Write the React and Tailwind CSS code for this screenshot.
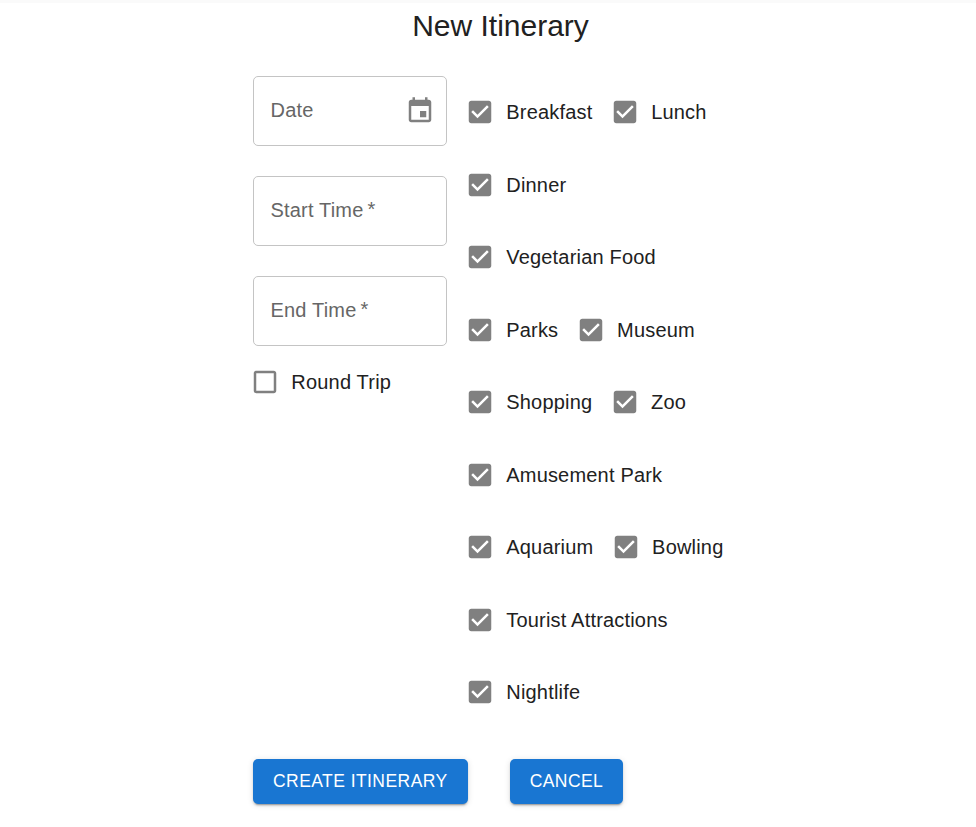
import React from "react";

const OPTION_ROWS = [
  ["Breakfast", "Lunch"],
  ["Dinner"],
  ["Vegetarian Food"],
  ["Parks", "Museum"],
  ["Shopping", "Zoo"],
  ["Amusement Park"],
  ["Aquarium", "Bowling"],
  ["Tourist Attractions"],
  ["Nightlife"],
];

const CHECKED =
  "M19 3H5c-1.11 0-2 .9-2 2v14c0 1.1.89 2 2 2h14c1.11 0 2-.9 2-2V5c0-1.1-.89-2-2-2zm-9 14l-5-5 1.41-1.41L10 14.17l7.59-7.59L19 8l-9 9z";
const UNCHECKED =
  "M19 5v14H5V5h14m0-2H5c-1.1 0-2 .9-2 2v14c0 1.1.9 2 2 2h14c1.1 0 2-.9 2-2V5c0-1.1-.9-2-2-2z";
const CALENDAR =
  "M17 12h-5v5h5v-5zM16 1v2H8V1H6v2H5c-1.11 0-1.99.9-1.99 2L3 19c0 1.1.89 2 2 2h14c1.1 0 2-.9 2-2V5c0-1.1-.9-2-2-2h-1V1h-2zm3 18H5V8h14v11z";

function Icon({ path }) {
  return (
    <svg viewBox="0 0 24 24" className="size-[30px] shrink-0 fill-[#808080]">
      <path d={path} />
    </svg>
  );
}

function Option({ label, checked }) {
  return (
    <label className="-ml-[13.75px] mr-5 flex items-center">
      <span className="p-[11.25px]">
        <Icon path={checked ? CHECKED : UNCHECKED} />
      </span>
      <span className="whitespace-nowrap leading-[30px]">{label}</span>
    </label>
  );
}

function Field({ label, required, children }) {
  return (
    <div className="flex h-[70px] w-[194px] items-center justify-between rounded-[5px] border border-[#c4c4c4] pl-[16.5px] pr-[11px] text-[#666666]">
      <span className="-mt-0.5 flex">
        {label}
        {required && <span className="-mt-px mb-px ml-1">*</span>}
      </span>
      {children}
    </div>
  );
}

function Button({ children }) {
  return (
    <button className="h-[45px] rounded-[5px] bg-[#1976d2] px-5 text-[17.5px] tracking-[0.44px] whitespace-nowrap text-white shadow-[0_3px_1px_-2px_rgba(0,0,0,0.2),0_2px_2px_0_rgba(0,0,0,0.14),0_1px_6px_0_rgba(0,0,0,0.12)]">
      {children}
    </button>
  );
}

export default function App() {
  return (
    <div className="h-[827px] overflow-hidden border-t-[3px] border-[#fafafa] bg-white font-['Liberation_Sans',Arial,sans-serif] text-[20px] tracking-[0.1875px] text-[#212121]">
      <main className="ml-[253px] w-[495px]">
        <h1 className="pt-[3px] text-center text-[30px] leading-[40px] tracking-normal">New Itinerary</h1>
        <div className="mt-[30px] flex">
          <div className="flex w-[214.5px] flex-col">
            <div className="flex flex-col gap-[30px]">
              <Field label="Date">
                <Icon path={CALENDAR} />
              </Field>
              <Field label="Start Time" required />
              <Field label="End Time" required />
            </div>
            <div className="-ml-[0.4px] mt-[9.75px] flex">
              <Option label="Round Trip" />
            </div>
          </div>
          <div className="mt-[9.75px] flex flex-col gap-5">
            {OPTION_ROWS.map((row) => (
              <div key={row[0]} className="flex">
                {row.map((label) => (
                  <Option key={label} label={label} checked />
                ))}
              </div>
            ))}
          </div>
        </div>
        <div className="mt-[40.75px] flex gap-[42px]">
          <Button>CREATE ITINERARY</Button>
          <Button>CANCEL</Button>
        </div>
      </main>
    </div>
  );
}
